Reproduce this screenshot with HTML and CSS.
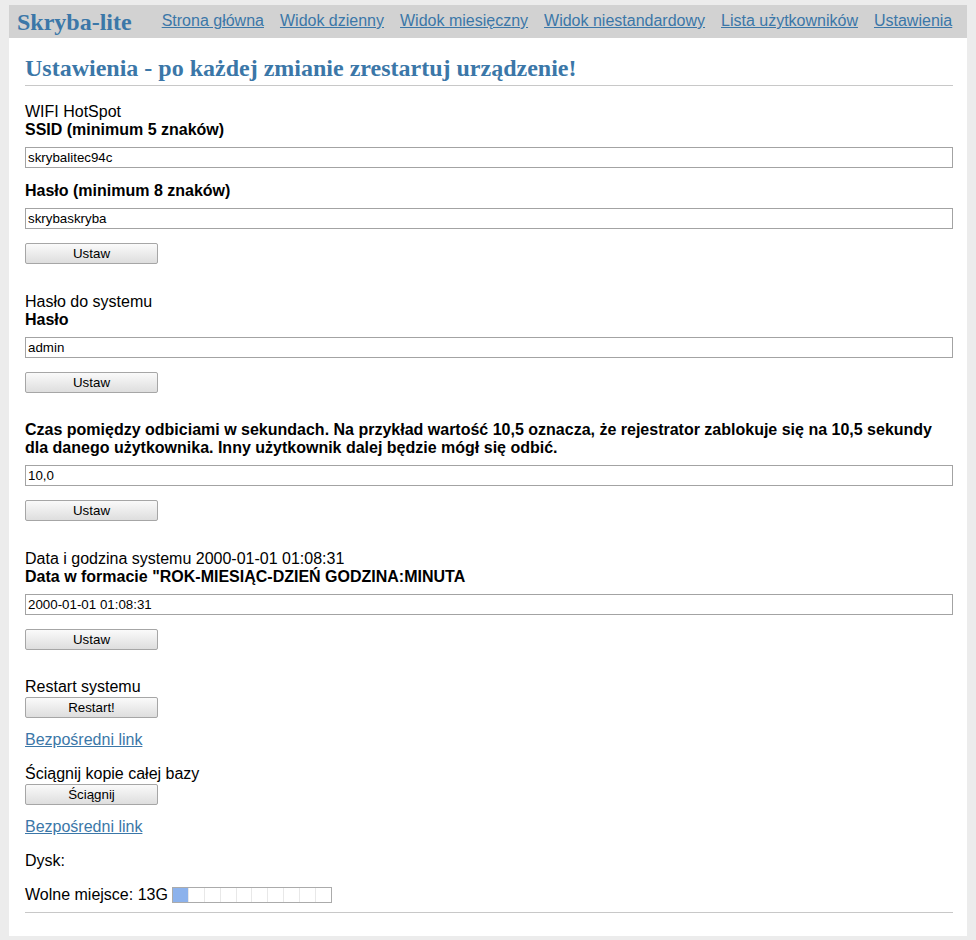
FILE: index.html
```html
<!DOCTYPE html>
<html lang="pl">
<head>
    <meta charset="UTF-8">
    <meta name="viewport" content="width=device-width, initial-scale=1.0">
    <title>Skryba-lite - Ustawienia</title>
    <link rel="stylesheet" href="styles.css">
</head>
<body>
    <div class="page">
        <!-- Menu górne -->
        <div class="nav">
            <span class="logo">Skryba-lite</span>
            <a href="#">Strona główna</a>
            <a href="#">Widok dzienny</a>
            <a href="#">Widok miesięczny</a>
            <a href="#">Widok niestandardowy</a>
            <a href="#">Lista użytkowników</a>
            <a href="#">Ustawienia</a>
        </div>

        <div class="content">
            <h2 class="title">Ustawienia - po każdej zmianie zrestartuj urządzenie!</h2>
            <hr class="line">

            <!-- WIFI -->
            <form class="section">
                <div class="section-name">WIFI HotSpot</div>
                <div class="field-label">SSID (minimum 5 znaków)</div>
                <input class="text-input" type="text" value="skrybalitec94c">
                <div class="field-label">Hasło (minimum 8 znaków)</div>
                <input class="text-input" type="text" value="skrybaskryba">
                <button class="btn" type="button">Ustaw</button>
            </form>

            <!-- Hasło systemu -->
            <form class="section">
                <div class="section-name">Hasło do systemu</div>
                <div class="field-label">Hasło</div>
                <input class="text-input" type="text" value="admin">
                <button class="btn" type="button">Ustaw</button>
            </form>

            <!-- Czas między odbiciami -->
            <form class="section">
                <div class="field-label">Czas pomiędzy odbiciami w sekundach. Na przykład wartość 10,5 oznacza, że rejestrator zablokuje się na 10,5 sekundy dla danego użytkownika. Inny użytkownik dalej będzie mógł się odbić.</div>
                <input class="text-input" type="text" value="10,0">
                <button class="btn" type="button">Ustaw</button>
            </form>

            <!-- Data i godzina -->
            <form class="section">
                <div class="section-name">Data i godzina systemu 2000-01-01 01:08:31</div>
                <div class="field-label">Data w formacie "ROK-MIESIĄC-DZIEŃ GODZINA:MINUTA</div>
                <input class="text-input" type="text" value="2000-01-01 01:08:31">
                <button class="btn" type="button">Ustaw</button>
            </form>

            <div class="section small">
                <div class="section-name">Restart systemu</div>
                <button class="btn btn-tight" type="button">Restart!</button>
                <a class="direct-link" href="#">Bezpośredni link</a>
            </div>

            <div class="section small">
                <div class="section-name">Ściągnij kopie całej bazy</div>
                <button class="btn btn-tight" type="button">Ściągnij</button>
                <a class="direct-link" href="#">Bezpośredni link</a>
            </div>

            <div class="disk">Dysk:</div>
            <div class="disk-free">
                Wolne miejsce: 13G
                <span class="bar">
                    <span class="cell filled"></span>
                    <span class="cell"></span>
                    <span class="cell"></span>
                    <span class="cell"></span>
                    <span class="cell"></span>
                    <span class="cell"></span>
                    <span class="cell"></span>
                    <span class="cell"></span>
                    <span class="cell"></span>
                    <span class="cell"></span>
                </span>
            </div>
            <hr class="line line-bottom">
        </div>
    </div>
</body>
</html>
```

FILE: styles.css
```css
/* Tło strony */
body {
    margin: 0;
    background-color: #ececec;
    font-family: 'Liberation Sans', Arial, sans-serif;
    font-size: 16px;
    color: #000;
}

/* Biały kontener */
.page {
    margin: 5px 9px;
    background-color: #fff;
    padding-bottom: 23px;
}

/* Menu */
.nav {
    display: flex;
    align-items: flex-start;
    gap: 16px;
    height: 33px;
    padding-left: 8px;
    background-color: #d2d2d2;
}

.logo {
    font-family: 'Liberation Serif', 'Times New Roman', serif;
    font-weight: bold;
    font-size: 24px;
    color: #3b77a8;
    padding-top: 4px;
    margin-right: 14px;
}

.nav a {
    padding-top: 7px;
    color: #3b77a8;
}

.content {
    padding: 0 14px 0 16px;
}

.title {
    margin: 17px 0 0 0;
    font-family: 'Liberation Serif', 'Times New Roman', serif;
    font-weight: bold;
    font-size: 24px;
    color: #3b77a8;
}

.line {
    margin: 3px 0 17px 0;
    border: none;
    border-top: 1px solid #c8c8c8;
}

/* Sekcje formularza */
.section {
    display: flex;
    flex-direction: column;
    align-items: flex-start;
    margin: 0 0 28.5px 0;
}

.section.small {
    margin-bottom: 16px;
}

.field-label {
    font-weight: bold;
    margin-bottom: 8px;
}

.text-input {
    box-sizing: border-box;
    width: 100%;
    height: 21px;
    margin: 0 0 14px 0;
    padding: 0 2px;
    border: 1px solid #a3a3a3;
    font-family: 'Liberation Sans', Arial, sans-serif;
    font-size: 13.33px;
    color: #000;
    outline: none;
}

.btn {
    box-sizing: border-box;
    width: 133px;
    height: 21px;
    padding: 0;
    border: 1px solid #a6a6a6;
    border-radius: 2px;
    background: linear-gradient(#fafafa, #dedede);
    font-family: 'Liberation Sans', Arial, sans-serif;
    font-size: 13.33px;
    color: #000;
}

.btn-tight {
    margin-top: 1px;
}

.direct-link {
    margin-top: 13px;
    color: #3b77a8;
}

.disk {
    margin-bottom: 16px;
}

.disk-free {
    display: flex;
    align-items: center;
}

/* Pasek zajętości dysku */
.bar {
    display: flex;
    width: 160px;
    height: 16px;
    margin-left: 4px;
    box-sizing: border-box;
    border: 1px solid #ababab;
}

.cell {
    flex: 1;
    border-right: 1px solid #e8e8e8;
}

.cell:last-child {
    border-right: none;
}

.cell.filled {
    background-color: #8cb2ec;
}

.line-bottom {
    margin: 8px 0 0 0;
}
```
